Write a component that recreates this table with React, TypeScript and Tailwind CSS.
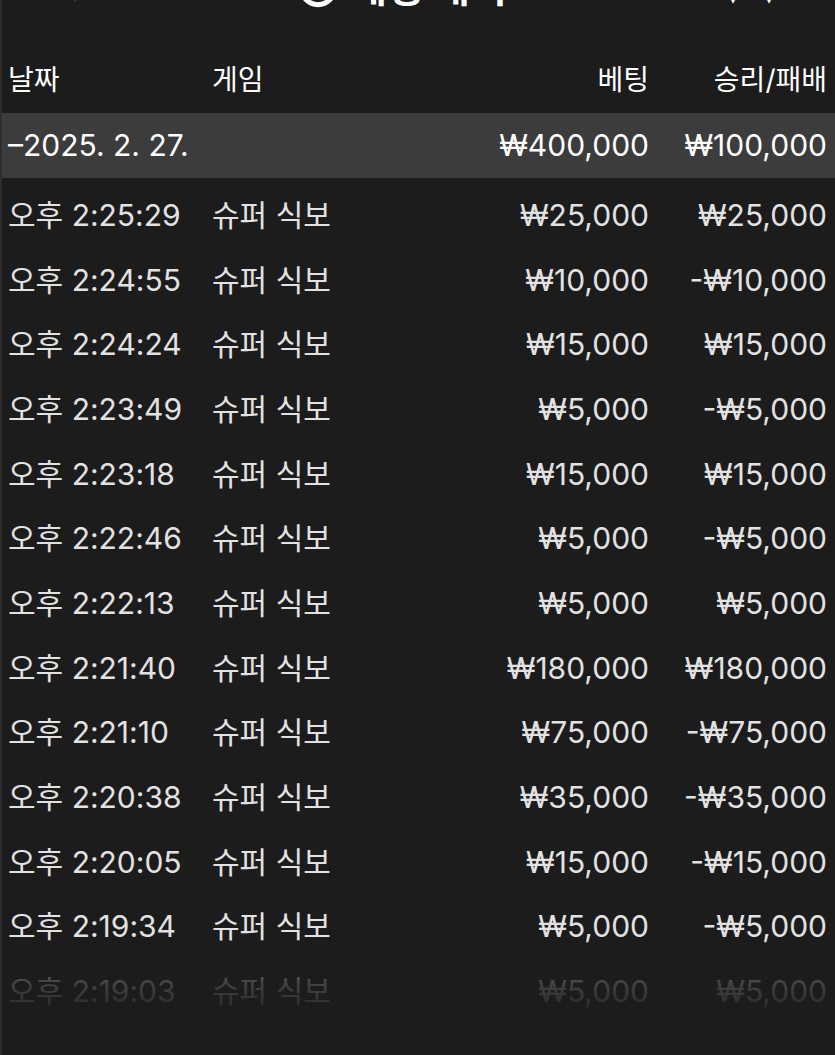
import { Clock, ChevronLeft } from 'lucide-react';

type Row = { time: string; game: string; bet: string; result: string };

const ROWS: Row[] = [
  { time: '오후 2:25:29', game: '슈퍼 식보', bet: '₩25,000', result: '₩25,000' },
  { time: '오후 2:24:55', game: '슈퍼 식보', bet: '₩10,000', result: '-₩10,000' },
  { time: '오후 2:24:24', game: '슈퍼 식보', bet: '₩15,000', result: '₩15,000' },
  { time: '오후 2:23:49', game: '슈퍼 식보', bet: '₩5,000', result: '-₩5,000' },
  { time: '오후 2:23:18', game: '슈퍼 식보', bet: '₩15,000', result: '₩15,000' },
  { time: '오후 2:22:46', game: '슈퍼 식보', bet: '₩5,000', result: '-₩5,000' },
  { time: '오후 2:22:13', game: '슈퍼 식보', bet: '₩5,000', result: '₩5,000' },
  { time: '오후 2:21:40', game: '슈퍼 식보', bet: '₩180,000', result: '₩180,000' },
  { time: '오후 2:21:10', game: '슈퍼 식보', bet: '₩75,000', result: '-₩75,000' },
  { time: '오후 2:20:38', game: '슈퍼 식보', bet: '₩35,000', result: '-₩35,000' },
  { time: '오후 2:20:05', game: '슈퍼 식보', bet: '₩15,000', result: '-₩15,000' },
  { time: '오후 2:19:34', game: '슈퍼 식보', bet: '₩5,000', result: '-₩5,000' },
  { time: '오후 2:19:03', game: '슈퍼 식보', bet: '₩5,000', result: '₩5,000' },
];

const FONT = "font-['Inter','Noto_Sans_CJK_KR',sans-serif]";

export default function App() {
  return (
    <div className={`relative h-[1055px] w-full overflow-hidden border-l-2 border-[#2e2e2e] bg-[#1c1c1c] ${FONT}`}>
      {/* Title bar, scrolled mostly out of view */}
      <div className="mt-[-42px] flex h-[50px] items-end justify-between px-12 text-white">
        <ChevronLeft size={40} strokeWidth={2.5} />
        <div className="flex items-center gap-3 text-[40px] font-bold leading-none">
          <Clock size={40} strokeWidth={3} />
          <span>베팅 내역</span>
        </div>
        <div className="text-[36px] font-bold leading-none">∨∨</div>
      </div>

      {/* Column headers */}
      <div className="mt-[38px] grid h-[67px] grid-cols-[204px_1fr_190px_178px] items-center pl-[6px] pr-[8px] text-[28px] text-white">
        <span>날짜</span>
        <span>게임</span>
        <span className="text-right">베팅</span>
        <span className="text-right">승리/패배</span>
      </div>

      {/* Date summary */}
      <div className="grid h-[65px] grid-cols-[1fr_190px_178px] items-center bg-[#3c3c3c] pl-[6px] pr-[8px] text-[30px] text-white">
        <span>–2025. 2. 27.</span>
        <span className="text-right">₩400,000</span>
        <span className="text-right">₩100,000</span>
      </div>

      {/* Rows */}
      <div className="pt-[5px]">
        {ROWS.map((r) => (
          <div
            key={r.time}
            className="grid h-[64.7px] grid-cols-[204px_1fr_190px_178px] items-center pl-[6px] pr-[8px] text-[30px] text-[#e2e2e2]"
          >
            <span>{r.time}</span>
            <span>{r.game}</span>
            <span className="text-right">{r.bet}</span>
            <span className="text-right">{r.result}</span>
          </div>
        ))}
      </div>

      {/* Bottom fade */}
      <div className="pointer-events-none absolute bottom-0 left-0 right-0 h-[105px] bg-gradient-to-b from-transparent via-[#1c1c1c]/80 via-30% to-[#1c1c1c] to-70%" />
    </div>
  );
}
